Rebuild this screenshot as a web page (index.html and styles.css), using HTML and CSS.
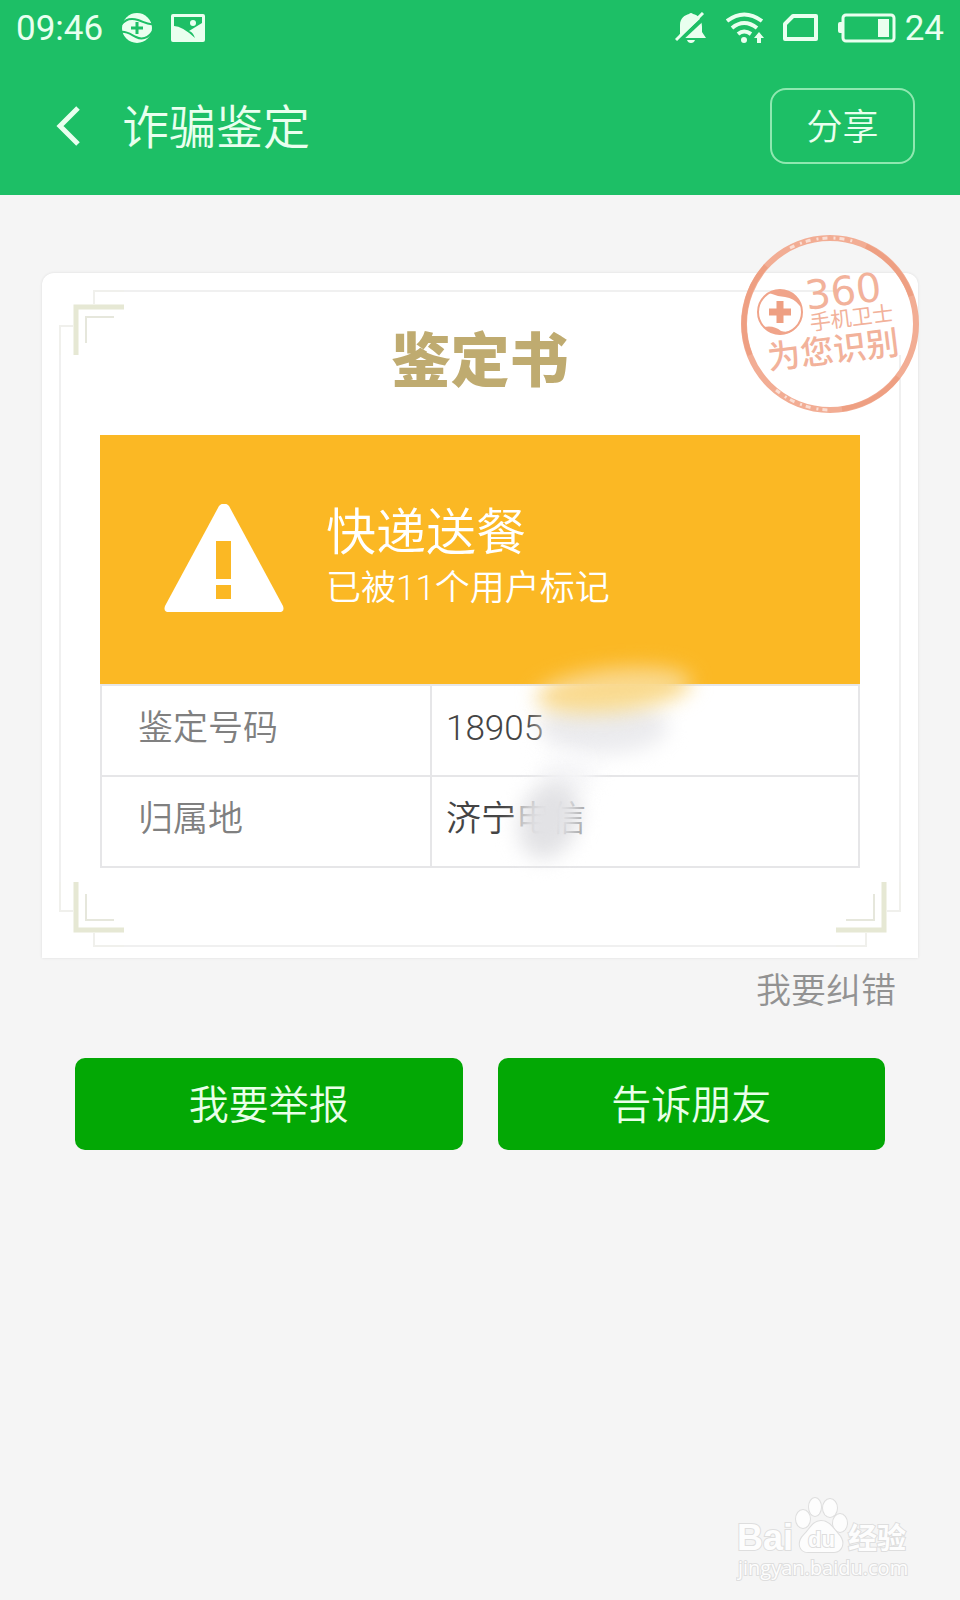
FILE: index.html
```html
<!DOCTYPE html>
<html lang="zh-CN">
  <head>
    <meta charset="UTF-8" />
    <meta name="viewport" content="width=device-width, initial-scale=1.0" />
    <title>诈骗鉴定</title>
    <link rel="stylesheet" href="styles.css">
  </head>
  <body>
    <header class="header">
      <div class="status-bar">
        <span>09:46</span>
        <svg width="32" height="32" viewBox="0 0 32 32">
          <circle cx="16" cy="16" r="15" fill="#e9ffef" />
          <path d="M0 13C5 6 11 6 17 8S27 13 32 12M0 20C5 19 9 22 15 25S27 26 32 19" fill="none" stroke="#1dbf66" stroke-width="2" />
          <path d="M16 10V22M10 16H22" stroke="#1dbf66" stroke-width="3" />
        </svg>
        <svg width="34" height="28" viewBox="0 0 34 28">
          <path fill="#e9ffef" fill-rule="evenodd" d="M2 0H32Q34 0 34 2V26Q34 28 32 28H2Q0 28 0 26V2Q0 0 2 0ZM3 3V12Q11 12 24 24Q22 18 18 17L31 9V3Z" />
          <circle cx="22" cy="9" r="3" fill="#e9ffef" />
        </svg>
        <div class="status-right">
          <svg width="32" height="32" viewBox="0 0 32 32">
            <path fill="#e9ffef" d="M5 22V13C5 6 10 3 14 2Q16 0 18 2C23 3 27 7 27 15V20L31 26H3ZM12 28H20Q19 31 16 31T12 28Z" />
            <path d="M3 30L31 4" stroke="#1dbf66" stroke-width="4" />
            <path d="M1 28L28 1" stroke="#e9ffef" stroke-width="3" />
          </svg>
          <svg width="38" height="32" viewBox="0 0 38 32">
            <g fill="none" stroke="#e9ffef" stroke-width="4">
              <path d="M1 9Q18 -4 36 9" />
              <path d="M6 16Q18 6 31 16" />
              <path d="M12 22Q18 17 25 22" />
            </g>
            <circle cx="18" cy="28" r="3" fill="#e9ffef" />
            <path d="M33 20L38 26H35V31H31V26H28Z" fill="#e9ffef" />
          </svg>
          <svg width="36" height="28" viewBox="0 0 36 28">
            <path d="M10 2H33V25H2V10Z" fill="none" stroke="#e9ffef" stroke-width="4" stroke-linejoin="round" />
          </svg>
          <svg width="58" height="30" viewBox="0 0 58 30">
            <rect x="5" y="2" width="51" height="26" rx="3" fill="none" stroke="#e9ffef" stroke-width="3" />
            <path d="M4 9H2Q0 9 0 11V18Q0 20 2 20H4ZM40 6H51V24H40Z" fill="#e9ffef" />
          </svg>
          <span class="battery-level">24</span>
        </div>
      </div>
      <div class="title-bar">
        <button class="back-btn" type="button" aria-label="返回">
          <svg width="24" height="40" viewBox="0 0 24 40">
            <path d="M22 2L4 20L22 38" fill="none" stroke="#e9ffef" stroke-width="5" />
          </svg>
        </button>
        <h1>诈骗鉴定</h1>
        <button class="share-btn" type="button">分享</button>
      </div>
    </header>

    <main class="main">
      <section class="card">
        <svg class="corner top-left" width="82" height="82"><use href="#corner" /></svg>
        <svg class="corner bottom-left" width="82" height="82"><use href="#corner" /></svg>
        <svg class="corner bottom-right" width="82" height="82"><use href="#corner" /></svg>

        <svg class="stamp" width="180" height="180" viewBox="0 0 180 180">
          <circle cx="90" cy="90" r="86" fill="none" stroke="#f2ad94" stroke-width="6" />
          <path d="M26 32A86 86 0 0 0 10 121M126 12A86 86 0 0 1 171 62M102 175A86 86 0 0 0 158 143" fill="none" stroke="#ee9f82" stroke-width="5" />
          <path d="M50 14A86 86 0 0 1 116 8M36 156A86 86 0 0 0 92 176" fill="none" stroke="#fff" stroke-width="3" stroke-dasharray="5 6 2 4" opacity="0.6" />
          <circle cx="40" cy="78" r="22" fill="none" stroke="#f0a48a" stroke-width="2" />
          <path d="M29 59Q41 51 55 62Q62 68 60 72Q54 64 45 63Q36 62 29 59ZM24 93Q34 91 41 97Q48 99 55 95Q45 103 34 99Q27 97 24 93Z" fill="#f0a48a" />
          <path d="M40 67V89M29 78H51" stroke="#ee9f82" stroke-width="7" />
          <g transform="rotate(-7 90 90)" fill="#f2b29b">
            <text class="stamp-360" x="69" y="73">360</text>
            <text class="stamp-name" x="70" y="94">手机卫士</text>
            <text class="stamp-note" x="24" y="128">为您识别</text>
          </g>
        </svg>

        <h2>鉴定书</h2>

        <div class="alert">
          <svg width="120" height="110" viewBox="0 0 120 110">
            <path d="M55 2Q60 -3 65 2L119 102Q121 108 115 108H5Q-1 108 1 102Z" fill="#fff" />
            <path d="M52 37H67V75H52ZM52 81H67V95H52Z" fill="#fbb824" />
          </svg>
          <div>
            <p class="alert-title">快递送餐</p>
            <p class="alert-text">已被11个用户标记</p>
          </div>
        </div>

        <div class="details">
          <table>
            <tr>
              <th scope="row">鉴定号码</th>
              <td>18905</td>
            </tr>
            <tr>
              <th scope="row">归属地</th>
              <td>济宁<span class="faded">电信</span></td>
            </tr>
          </table>
          <!-- hides part of the number and the carrier -->
          <div class="smudge smudge-number"></div>
          <div class="smudge smudge-yellow"></div>
          <div class="smudge smudge-line"></div>
          <div class="smudge smudge-carrier"></div>
        </div>
      </section>

      <a class="correct-link" href="#">我要纠错</a>

      <div class="actions">
        <button class="action-btn" type="button">我要举报</button>
        <button class="action-btn" type="button">告诉朋友</button>
      </div>
    </main>

    <footer class="footer">
      <svg width="174" height="88" viewBox="0 0 174 88">
        <g fill="#fdfdfd" stroke="#dedede" stroke-width="2" paint-order="stroke">
          <text class="wm-logo" x="1" y="56">Bai</text>
          <ellipse cx="67" cy="25" rx="7" ry="9" />
          <ellipse cx="79" cy="13" rx="6" ry="9" />
          <ellipse cx="94" cy="14" rx="7" ry="9" />
          <ellipse cx="104" cy="29" rx="7" ry="9" />
          <path d="M85 27C93 27 97 34 102 40C110 48 106 58 98 58H72C63 58 61 48 68 41C74 35 77 27 85 27Z" />
          <text class="wm-du" x="72" y="53">du</text>
          <text class="wm-cn" x="112" y="55">经验</text>
          <text class="wm-url" x="2" y="81">jingyan.baidu.com</text>
        </g>
      </svg>
    </footer>

    <svg class="defs" width="0" height="0">
      <symbol id="corner" viewBox="0 0 82 82">
        <g fill="none">
          <path d="M18 82V53H31M52 31V18H82" stroke="#f0f0ec" stroke-width="2" />
          <path d="M34 82V34H82" stroke="#e6e8d4" stroke-width="5" />
          <path d="M44 70V44H72" stroke="#e6e7dc" stroke-width="2" />
        </g>
      </symbol>
    </svg>
  </body>
</html>
```
FILE: styles.css
```css
* {
  margin: 0;
  padding: 0;
  box-sizing: border-box;
}

body {
  min-height: 100vh;
  display: flex;
  flex-direction: column;
  background-color: #f5f5f5;
  font-family: Roboto, "Noto Sans CJK SC", sans-serif;
  font-weight: 350;
  color: #444;
}

button {
  font: inherit;
  cursor: pointer;
}

.header {
  background-color: #1dbf66;
  color: #e9ffef;
}

.status-bar {
  height: 56px;
  padding: 0 16px;
  display: flex;
  align-items: center;
  gap: 18px;
  font-size: 35px;
  font-weight: 400;
}

.status-right {
  margin-left: auto;
  display: flex;
  align-items: center;
  gap: 19px;
}

.battery-level {
  margin-left: -10px;
}

.title-bar {
  height: 139px;
  padding: 0 45px 0 56px;
  display: flex;
  align-items: center;
}

.back-btn {
  height: 40px;
  border: none;
  background: none;
}

.title-bar h1 {
  margin-left: 42px;
  padding-bottom: 4px;
  font-size: 47px;
  font-weight: 350;
}

.share-btn {
  width: 145px;
  height: 76px;
  margin-left: auto;
  padding-bottom: 4px;
  border: 2px solid #8fe8b0;
  border-radius: 16px;
  background: none;
  color: #e9ffef;
  font-size: 36px;
}

.main {
  padding: 78px 42px 0;
  display: flex;
  flex-direction: column;
}

.card {
  position: relative;
  padding: 42px 58px 90px;
  background-color: #fff;
  border-radius: 12px 12px 0 0;
  box-shadow: 0 0 3px rgba(0, 0, 0, 0.1);
}

/* thin frame between the corners */
.card::before,
.card::after {
  content: "";
  position: absolute;
  border: 0 solid #f0f0f0;
}

.card::before {
  inset: 82px 17px 76px;
  border-width: 0 2px;
}

.card::after {
  inset: 17px 82px 11px;
  border-width: 2px 0;
}

.corner {
  position: absolute;
}

.top-left {
  top: 0;
  left: 0;
}

.bottom-left {
  bottom: -6px;
  left: 0;
  transform: scaleY(-1);
}

.bottom-right {
  right: 0;
  bottom: -6px;
  transform: scale(-1);
}

.stamp {
  position: absolute;
  top: -39px;
  right: -2px;
  z-index: 1;
}

.stamp-360 {
  font: 40px "DejaVu Sans", sans-serif;
}

.stamp-name {
  font-size: 21px;
  font-weight: 400;
}

.stamp-note {
  font-size: 33px;
  font-weight: 500;
}

.card h2 {
  height: 120px;
  line-height: 94px;
  text-align: center;
  font-size: 59px;
  font-weight: 900;
  color: #bfab70;
}

.alert {
  height: 249px;
  padding: 0 64px 2px;
  display: flex;
  align-items: center;
  gap: 42px;
  background-color: #fbb824;
  color: #fff;
}

.alert-title {
  font-size: 50px;
  line-height: 60px;
}

.alert-text {
  font-size: 35px;
  line-height: 52px;
}

.details {
  position: relative;
}

table {
  width: 100%;
  border-collapse: collapse;
  font-size: 35px;
}

th,
td {
  height: 91px;
  padding-bottom: 4px;
  border: 2px solid #e6e6e8;
  text-align: left;
  line-height: 40px;
}

th {
  width: 330px;
  padding-left: 36px;
  font-weight: 350;
  color: #808080;
}

td {
  padding-left: 14px;
}

.faded {
  color: #999;
}

.smudge {
  position: absolute;
  border-radius: 50%;
  filter: blur(10px);
}

.smudge-number {
  left: 438px;
  top: 14px;
  width: 130px;
  height: 56px;
  background-color: #ebebee;
}

.smudge-yellow {
  left: 436px;
  top: -16px;
  width: 156px;
  height: 44px;
  background: linear-gradient(#fbd68a, #f8dd92);
  transform: rotate(-6deg);
}

.smudge-line {
  left: 440px;
  top: 72px;
  width: 56px;
  height: 36px;
  background-color: #f6f6f8;
}

.smudge-carrier {
  left: 420px;
  top: 96px;
  width: 58px;
  height: 80px;
  background-color: #e2e2e5;
  transform: rotate(20deg);
}

.correct-link {
  align-self: flex-end;
  margin-right: 22px;
  font-size: 35px;
  line-height: 68px;
  color: #929292;
  text-decoration: none;
}

.actions {
  padding: 32px 33px;
  display: flex;
  gap: 35px;
}

.action-btn {
  flex: 1;
  height: 92px;
  padding-bottom: 4px;
  border: none;
  border-radius: 10px;
  background-color: #03a805;
  color: #e9ffe9;
  font-size: 40px;
}

.footer {
  margin-top: auto;
  padding: 0 50px 18px;
  display: flex;
  justify-content: flex-end;
}

.wm-logo {
  font: bold 36px "Liberation Sans", sans-serif;
}

.wm-du {
  font: bold 22px "Liberation Sans", sans-serif;
}

.wm-cn {
  font-size: 29px;
  font-weight: 700;
}

.wm-url {
  font: 20px "Open Sans", sans-serif;
}

.defs {
  position: absolute;
}
```
